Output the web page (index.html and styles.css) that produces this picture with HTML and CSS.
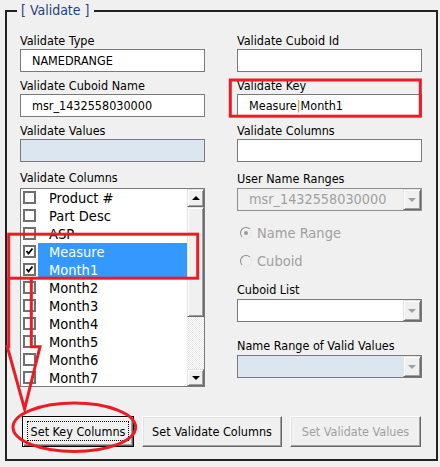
FILE: index.html
```html
<!DOCTYPE html>
<html>
<head>
<meta charset="utf-8">
<title>Validate</title>
<link rel="stylesheet" href="styles.css">
</head>
<body>
<div class="page">
  <fieldset class="group">
    <legend class="group-title">[ Validate ]</legend>
    <div class="cols">
      <div class="col">
        <div class="lbl">Validate Type</div>
        <div class="tb">NAMEDRANGE</div>
        <div class="lbl gap6">Validate Cuboid Name</div>
        <div class="tb">msr_1432558030000</div>
        <div class="lbl gap6">Validate Values</div>
        <div class="tb tb-blue"></div>
        <div class="lbl gap8">Validate Columns</div>
        <div class="listbox">
          <div class="items">
            <div class="item"><span class="chk"></span><span class="txt">Product #</span></div>
            <div class="item"><span class="chk"></span><span class="txt">Part Desc</span></div>
            <div class="item"><span class="chk"></span><span class="txt">ASP</span></div>
            <div class="item sel"><span class="chk on"><svg width="9" height="9" viewBox="0 0 9 9"><polyline points="1.5,4 3.5,6.5 7.5,1.5" fill="none" stroke="#000" stroke-width="1.8"/></svg></span><span class="txt">Measure</span></div>
            <div class="item sel"><span class="chk on"><svg width="9" height="9" viewBox="0 0 9 9"><polyline points="1.5,4 3.5,6.5 7.5,1.5" fill="none" stroke="#000" stroke-width="1.8"/></svg></span><span class="txt">Month1</span></div>
            <div class="item"><span class="chk"></span><span class="txt">Month2</span></div>
            <div class="item"><span class="chk"></span><span class="txt">Month3</span></div>
            <div class="item"><span class="chk"></span><span class="txt">Month4</span></div>
            <div class="item"><span class="chk"></span><span class="txt">Month5</span></div>
            <div class="item"><span class="chk"></span><span class="txt">Month6</span></div>
            <div class="item"><span class="chk"></span><span class="txt">Month7</span></div>
          </div>
          <div class="vscroll">
            <div class="sb-btn"><span class="tri-up"></span></div>
            <div class="sb-thumb"></div>
            <div class="sb-track"></div>
            <div class="sb-btn"><span class="tri-down"></span></div>
          </div>
        </div>
      </div>
      <div class="col">
        <div class="lbl">Validate Cuboid Id</div>
        <div class="tb"></div>
        <div class="lbl gap6">Validate Key</div>
        <div class="tb tb-key">Measure<span class="pipe">|</span>Month1</div>
        <div class="lbl gap6">Validate Columns</div>
        <div class="tb"></div>
        <div class="lbl gap9">User Name Ranges</div>
        <div class="combo combo-dis"><span class="val">msr_1432558030000</span><span class="dd"><span class="tri-down gray"></span></span></div>
        <div class="radio r1"><span class="rdot on"></span><span class="rtxt">Name Range</span></div>
        <div class="radio r2"><span class="rdot"></span><span class="rtxt">Cuboid</span></div>
        <div class="lbl gap12">Cuboid List</div>
        <div class="combo"><span class="val"></span><span class="dd"><span class="tri-down gray"></span></span></div>
        <div class="lbl gap16">Name Range of Valid Values</div>
        <div class="combo combo-blue"><span class="val"></span><span class="dd"><span class="tri-down gray"></span></span></div>
      </div>
    </div>
    <div class="buttons">
      <button class="btn btn-focus w1" type="button">Set Key Columns</button>
      <button class="btn w2" type="button">Set Validate Columns</button>
      <button class="btn btn-dis w3" type="button">Set Validate Values</button>
    </div>
  </fieldset>
</div>
<svg class="annot" width="440" height="467" viewBox="0 0 440 467">
  <rect x="230.3" y="80" width="190" height="36.2" fill="none" stroke="#ed1c24" stroke-width="3"/>
  <rect x="8.7" y="234.2" width="189" height="44" fill="none" stroke="#ed1c24" stroke-width="3"/>
  <polyline points="8.7,278 8.7,346.7 7.3,346.7 24.6,409 40,346.7 31.3,346.7 31.3,278" fill="none" stroke="#ed1c24" stroke-width="3" stroke-linejoin="miter"/>
  <ellipse cx="74.3" cy="427.2" rx="61.3" ry="24.2" fill="none" stroke="#ed1c24" stroke-width="3"/>
</svg>
</body>
</html>
```
FILE: styles.css
```css
html, body {
  margin: 0;
  padding: 0;
  background: #f0f0f0;
}
body {
  width: 440px;
  height: 467px;
  position: relative;
  overflow: hidden;
  font-family: "DejaVu Sans Condensed", "DejaVu Sans", sans-serif;
  font-stretch: 87.5%;
  color: #000;
}
.page {
  padding: 2px 2px 0 5px;
}
.group {
  margin: 0;
  border: 2px solid #222;
  padding: 14px 14px 12px 13px;
  min-width: 0;
}
.group-title {
  font-size: 14px;
  line-height: 17px;
  color: #1f3f7c;
  padding: 0 5px 0 4px;
  margin-left: -3px;
}
.cols {
  display: grid;
  grid-template-columns: 185px 185px;
  column-gap: 32px;
  align-items: start;
}
.col {
  display: flex;
  flex-direction: column;
}
.lbl {
  height: 16px;
  line-height: 15px;
  font-size: 12.5px;
  white-space: nowrap;
}
.gap6 { margin-top: 6px; }
.gap8 { margin-top: 8px; }
.gap9 { margin-top: 9px; }
.gap12 { margin-top: 12px; }
.gap16 { margin-top: 16px; }
.tb {
  box-sizing: border-box;
  height: 23px;
  border: 1px solid #7a7a7a;
  background: #fff;
  padding-left: 11px;
  font-size: 12.5px;
  line-height: 21px;
  white-space: nowrap;
}
.tb-blue { background: #dce6f1; }
.pipe { color: #c9820f; }

/* list box */
.listbox {
  margin-top: 2px;
  box-sizing: border-box;
  height: 199px;
  border: 1px solid #7a7a7a;
  background: #fff;
  display: flex;
}
.items {
  flex: 1;
  overflow: hidden;
}
.item {
  height: 18px;
  display: flex;
  align-items: flex-start;
}
.chk {
  flex: none;
  box-sizing: border-box;
  width: 13px;
  height: 13px;
  margin: 2px 2px 0 2px;
  border: 2px solid #707070;
  background: #fff;
  display: flex;
  align-items: center;
  justify-content: center;
}
.chk svg { display: block; }
.txt {
  flex: 1;
  height: 18px;
  padding-left: 11px;
  font-size: 14.5px;
  line-height: 18px;
  white-space: nowrap;
}
.item.sel .txt {
  background: #3399ff;
  color: #fff;
}
.vscroll {
  width: 17px;
  flex: none;
  display: flex;
  flex-direction: column;
}
.sb-btn {
  box-sizing: border-box;
  height: 18px;
  background: #f0f0f0;
  border: 1px solid;
  border-color: #e3e3e3 #696969 #696969 #e3e3e3;
  box-shadow: inset 1px 1px #fff, inset -1px -1px #a0a0a0;
  display: flex;
  align-items: center;
  justify-content: center;
}
.sb-btn:last-child { height: 17px; }
.sb-thumb {
  box-sizing: border-box;
  height: 110px;
  background: #f0f0f0;
  border: 1px solid;
  border-color: #e3e3e3 #696969 #696969 #e3e3e3;
  box-shadow: inset 1px 1px #fff, inset -1px -1px #a0a0a0;
}
.sb-track {
  height: 52px;
  background: repeating-conic-gradient(#ffffff 0 25%, #e6e6e6 0 50%) 0 0 / 2px 2px;
}
.tri-up {
  width: 0;
  height: 0;
  border-left: 4px solid transparent;
  border-right: 4px solid transparent;
  border-bottom: 4px solid #000;
}
.tri-down {
  width: 0;
  height: 0;
  border-left: 4px solid transparent;
  border-right: 4px solid transparent;
  border-top: 4px solid #000;
}
.tri-down.gray { border-top-color: #a0a0a0; }

/* combo */
.combo {
  margin-top: 1px;
  box-sizing: border-box;
  height: 23px;
  border: 1px solid #7a7a7a;
  background: #fff;
  display: flex;
}
.combo-dis {
  background: #f0f0f0;
  border-color: #8f8f8f;
  color: #a0a0a0;
}
.combo-blue { background: #dce6f1; }
.combo .val {
  flex: 1;
  padding-left: 11px;
  font-size: 14.3px;
  line-height: 21px;
  white-space: nowrap;
  overflow: hidden;
}
.combo .dd {
  box-sizing: border-box;
  flex: none;
  width: 18px;
  background: #f0f0f0;
  border: 1px solid;
  border-color: #e3e3e3 #696969 #696969 #e3e3e3;
  box-shadow: inset 1px 1px #fff, inset -1px -1px #a0a0a0;
  display: flex;
  align-items: center;
  justify-content: center;
}

/* radios */
.radio {
  height: 18px;
  display: flex;
  align-items: center;
  padding-left: 3px;
  color: #a0a0a0;
  font-size: 14.5px;
}
.r1 { margin-top: 13px; }
.r2 { margin-top: 10px; }
.rdot {
  box-sizing: border-box;
  width: 12px;
  height: 12px;
  border-radius: 50%;
  border: 1px solid;
  border-color: #8a8a8a #e8e8e8 #e8e8e8 #8a8a8a;
  background: #f0f0f0;
  margin-right: 5px;
  display: flex;
  align-items: center;
  justify-content: center;
}
.rdot.on::after {
  content: "";
  width: 4px;
  height: 4px;
  border-radius: 50%;
  background: #9a9a9a;
}

/* buttons */
.buttons {
  margin-top: 29px;
  padding-left: 2px;
  display: flex;
  gap: 8px;
}
.btn {
  appearance: none;
  box-sizing: border-box;
  height: 31px;
  margin: 0;
  padding: 0;
  background: #f0f0f0;
  border: 1px solid;
  border-color: #fff #696969 #696969 #fff;
  box-shadow: inset -1px -1px #a0a0a0, inset 1px 1px #e3e3e3;
  font-family: inherit;
  font-stretch: inherit;
  font-size: 12.5px;
  color: #000;
  position: relative;
}
.w1 { width: 112px; }
.w2 { width: 140px; }
.w3 { width: 131px; }
.btn-focus {
  border-color: #000;
  box-shadow: inset 1px 1px #fff, inset -1px -1px #696969, inset -2px -2px #a0a0a0;
}
.btn-focus::after {
  content: "";
  position: absolute;
  left: 4px;
  right: 4px;
  top: 4px;
  bottom: 5px;
  border: 1px dotted #000;
}
.btn-dis { color: #a0a0a0; }

.annot {
  position: absolute;
  left: 0;
  top: 0;
  pointer-events: none;
}
```
